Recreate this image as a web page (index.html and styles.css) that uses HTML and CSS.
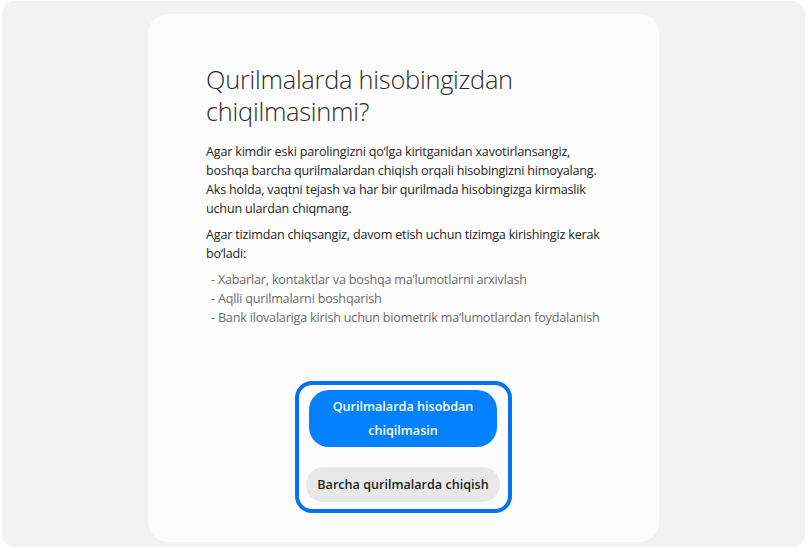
FILE: index.html
```html
<!DOCTYPE html>
<html lang="uz">
<head>
<meta charset="utf-8">
<title>Qurilmalarda hisobingizdan chiqilmasinmi?</title>
<link rel="stylesheet" href="styles.css">
</head>
<body>
<div class="frame">
  <main class="card">
    <h1 class="title">Qurilmalarda hisobingizdan chiqilmasinmi?</h1>
    <p class="text">Agar kimdir eski parolingizni qo‘lga kiritganidan xavotirlansangiz, boshqa barcha qurilmalardan chiqish orqali hisobingizni himoyalang. Aks holda, vaqtni tejash va har bir qurilmada hisobingizga kirmaslik uchun ulardan chiqmang.</p>
    <p class="text">Agar tizimdan chiqsangiz, davom etish uchun tizimga kirishingiz kerak bo‘ladi:</p>
    <ul class="list">
      <li>- Xabarlar, kontaktlar va boshqa ma’lumotlarni arxivlash</li>
      <li>- Aqlli qurilmalarni boshqarish</li>
      <li>- Bank ilovalariga kirish uchun biometrik ma’lumotlardan foydalanish</li>
    </ul>
    <div class="actions">
      <button class="btn btn-primary">Qurilmalarda hisobdan chiqilmasin</button>
      <button class="btn btn-secondary">Barcha qurilmalarda chiqish</button>
    </div>
  </main>
</div>
</body>
</html>
```
FILE: styles.css
```css
html, body {
  margin: 0;
  padding: 0;
  background: #ffffff;
}
body {
  width: 807px;
  height: 550px;
  font-family: "Open Sans", "Noto Sans", sans-serif;
}
.frame {
  margin: 1px 2px 0 2px;
  height: 546px;
  background: #f2f2f2;
  border-radius: 12px;
  display: flex;
  justify-content: center;
  padding-top: 13px;
  box-sizing: border-box;
}
.card {
  width: 511px;
  height: 528px;
  box-sizing: border-box;
  background: #fcfcfc;
  border-radius: 20px;
  padding: 49px 58px 0 58px;
  display: flex;
  flex-direction: column;
}
.title {
  margin: 0 0 15px 0;
  font-size: 25.4px;
  font-weight: 300;
  line-height: 32px;
  color: #2b2b2b;
  letter-spacing: -0.25px;
}
.text {
  margin: 0 0 7px 0;
  font-size: 12.6px;
  line-height: 19px;
  color: #252525;
  letter-spacing: -0.2px;
}
.list {
  list-style: none;
  margin: 0;
  padding: 0 0 0 5px;
  font-size: 12.6px;
  line-height: 19px;
  color: #6b6b6b;
  letter-spacing: -0.2px;
}
.actions {
  align-self: center;
  margin-top: 54px;
  border: 4px solid #0072f5;
  border-radius: 17px;
  padding: 5px 8px 7px 7px;
  display: flex;
  flex-direction: column;
  align-items: flex-start;
  gap: 20px;
  width: 217px;
  box-sizing: border-box;
}
.btn {
  font-family: inherit;
  font-weight: 600;
  font-size: 12.6px;
  border: none;
  cursor: pointer;
  flex: none;
}
.btn-primary {
  width: 188px;
  height: 57px;
  margin-left: 3px;
  border-radius: 20px;
  background: #0381fe;
  color: #ffffff;
  line-height: 24px;
  padding: 4px 20px;
}
.btn-secondary {
  width: 194px;
  height: 35px;
  border-radius: 18px;
  background: #e8e8e8;
  color: #1f1f1f;
  padding: 0 10px;
}
```
